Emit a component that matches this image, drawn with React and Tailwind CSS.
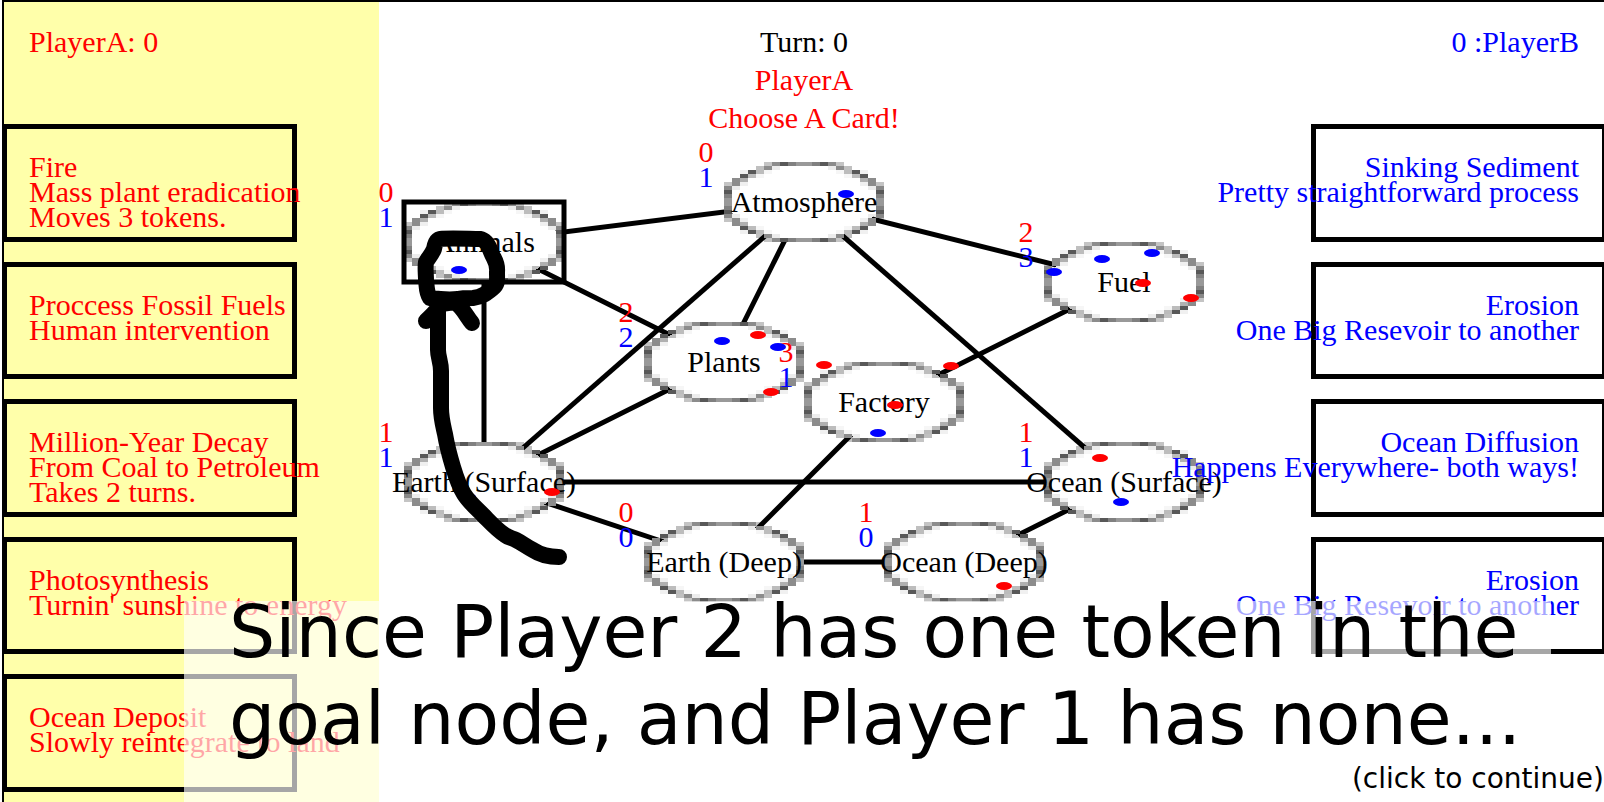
import React from 'react';

const NODES = [
  { id: 'animals', name: 'Animals', x: 105, y: 112, a: 0, b: 1, goal: true },
  { id: 'atmosphere', name: 'Atmosphere', x: 425, y: 72, a: 0, b: 1 },
  { id: 'fuel', name: 'Fuel', x: 745, y: 152, a: 2, b: 3 },
  { id: 'plants', name: 'Plants', x: 345, y: 232, a: 2, b: 2 },
  { id: 'factory', name: 'Factory', x: 505, y: 272, a: 3, b: 1 },
  { id: 'earthSurface', name: 'Earth (Surface)', x: 105, y: 352, a: 1, b: 1 },
  { id: 'oceanSurface', name: 'Ocean (Surface)', x: 745, y: 352, a: 1, b: 1 },
  { id: 'earthDeep', name: 'Earth (Deep)', x: 345, y: 432, a: 0, b: 0 },
  { id: 'oceanDeep', name: 'Ocean (Deep)', x: 585, y: 432, a: 1, b: 0 },
];

const BY_ID = Object.fromEntries(NODES.map((n) => [n.id, n]));

const EDGES = [
  ['animals', 'atmosphere'],
  ['animals', 'plants'],
  ['animals', 'earthSurface'],
  ['atmosphere', 'earthSurface'],
  ['atmosphere', 'plants'],
  ['atmosphere', 'oceanSurface'],
  ['atmosphere', 'fuel'],
  ['fuel', 'factory'],
  ['plants', 'earthSurface'],
  ['earthSurface', 'oceanSurface'],
  ['earthSurface', 'earthDeep'],
  ['earthDeep', 'factory'],
  ['earthDeep', 'oceanDeep'],
  ['oceanDeep', 'oceanSurface'],
];

const TOKENS = [
  ['b', 80, 140],
  ['b', 467, 64],
  ['b', 89, 367],
  ['a', 173, 362],
  ['b', 343, 211],
  ['a', 379, 205],
  ['b', 399, 217],
  ['a', 392, 262],
  ['a', 445, 235],
  ['a', 572, 236],
  ['a', 516, 275],
  ['b', 499, 303],
  ['a', 625, 456],
  ['b', 675, 142],
  ['b', 723, 129],
  ['b', 773, 123],
  ['a', 764, 153],
  ['a', 812, 168],
  ['a', 721, 328],
  ['b', 742, 372],
];

const CARDS_A = [
  ['Fire', 'Mass plant eradication', 'Moves 3 tokens.'],
  ['Proccess Fossil Fuels', 'Human intervention'],
  ['Million-Year Decay', 'From Coal to Petroleum', 'Takes 2 turns.'],
  ['Photosynthesis', "Turnin' sunshine to energy"],
  ['Ocean Deposit', 'Slowly reintegrate to land'],
];

const CARDS_B = [
  ['Sinking Sediment', 'Pretty straightforward process'],
  ['Erosion', 'One Big Resevoir to another'],
  ['Ocean Diffusion', 'Happens Everywhere- both ways!'],
  ['Erosion', 'One Big Resevoir to another'],
];

// Upper-left quarter of the 20x20 circle sprite: [column, row, gray level].
const SPRITE = [
  [5, 0, 196], [6, 0, 140], [7, 0, 88], [8, 0, 128], [9, 0, 153],
  [4, 1, 192], [5, 1, 140], [6, 1, 236],
  [2, 2, 240], [3, 2, 88], [4, 2, 188], [5, 2, 246],
  [2, 3, 88], [3, 3, 188], [4, 3, 246],
  [1, 4, 140], [2, 4, 176],
  [0, 5, 196], [1, 5, 140], [2, 5, 240],
  [0, 6, 136], [1, 6, 236],
  [0, 7, 88], [0, 8, 128], [0, 9, 153],
];

const SPRITE_CELLS = SPRITE.flatMap(([c, r, g]) => [
  [c, r, g],
  [19 - c, r, g],
  [c, 19 - r, g],
  [19 - c, 19 - r, g],
]);

function NodeShape({ x, y }) {
  return (
    <g transform={`translate(${x - 80} ${y - 40})`} shapeRendering="crispEdges">
      <ellipse cx="80" cy="40" rx="75" ry="38" fill="#fff" />
      {SPRITE_CELLS.map(([c, r, g]) => (
        <rect
          key={`${c}-${r}`}
          x={c * 8}
          y={r * 4}
          width="8"
          height="4"
          fill={g < 170 ? `rgb(${g} ${g} ${g})` : '#000'}
          fillOpacity={g < 170 ? 1 : 1 - g / 255}
        />
      ))}
    </g>
  );
}

function Board() {
  return (
    <div className="relative mx-auto h-[480px] w-[850px]">
      <svg className="absolute inset-0 overflow-visible" width="850" height="480" aria-hidden="true">
        {EDGES.map(([from, to]) => (
          <line
            key={`${from}-${to}`}
            x1={BY_ID[from].x}
            y1={BY_ID[from].y}
            x2={BY_ID[to].x}
            y2={BY_ID[to].y}
            stroke="#000"
            strokeWidth="5"
          />
        ))}
        {NODES.map((n) => (
          <NodeShape key={n.id} x={n.x} y={n.y} />
        ))}
        {NODES.filter((n) => n.goal).map((n) => (
          <rect
            key={n.id}
            x={n.x - 80}
            y={n.y - 40}
            width="160"
            height="80"
            fill="none"
            stroke="#000"
            strokeWidth="5"
          />
        ))}
      </svg>

      {NODES.map((n) => (
        <button
          key={n.id}
          type="button"
          className="absolute flex h-20 w-40 items-center justify-center pb-[2px] whitespace-nowrap"
          style={{ left: n.x - 80, top: n.y - 40 }}
        >
          {n.name}
        </button>
      ))}
      {NODES.map((n) => (
        <div
          key={n.id}
          className="absolute w-9 text-center"
          style={{ left: n.x - 116, top: n.y - 63 }}
        >
          <p className="text-[#ff0000]">{n.a}</p>
          <p className="text-[#0000ff]">{n.b}</p>
        </div>
      ))}

      <svg
        className="pointer-events-none absolute inset-0 overflow-visible"
        width="850"
        height="480"
        aria-hidden="true"
      >
        {TOKENS.map(([owner, x, y]) => (
          <ellipse key={`${x}-${y}`} cx={x} cy={y} rx="8" ry="4" fill={owner === 'a' ? '#f00' : '#00f'} />
        ))}
        <g
          transform="translate(-379 -130)"
          fill="none"
          stroke="#000"
          strokeWidth="16"
          strokeLinecap="round"
          strokeLinejoin="round"
        >
          <path d="M440 239 C450 238 470 239 480 239 C486 240 489 246 491 252 C494 260 498 262 497 272 C497 280 498 284 493 288 C487 293 482 297 473 298 C466 298 462 298 458 299 C448 300 438 299 430 298 C426 292 427 286 426 280 C426 274 425 268 426 262 C429 257 432 254 434 249 C435 244 436 240 440 239 Z" />
          <path d="M426 321 C431 316 436 312 441 304 L455 302 C464 309 466 316 472 323" />
          <path d="M438 302 V350 C438 357 441 362 441 371 V408 C441 418 443 425 445 434 C447 446 450 457 453 467 C456 477 459 486 464 494 C469 502 476 508 483 515 C490 522 497 530 505 535 C509 538 512 538 516 540 C522 543 527 547 533 550 C542 556 550 557 559 557" />
        </g>
      </svg>
    </div>
  );
}

export default function App() {
  return (
    <main className="relative min-h-screen w-full overflow-hidden bg-white pl-[2px] font-['Liberation_Serif',serif] text-[30px] leading-[25px] text-black">
      <div className="flex min-h-screen border-t-2 border-l-2 border-black">
        <aside className="flex w-[375px] shrink-0 flex-col bg-[#ffffaa] pb-[10px] text-[#ff0000]">
          <h2 className="h-[122px] pt-[27px] pl-[25px]">PlayerA: 0</h2>
          <div className="relative z-10 grid flex-1 grid-rows-5 gap-5">
            {CARDS_A.map((lines, i) => (
              <button
                key={i}
                type="button"
                className="flex w-[293px] flex-col items-start border-5 border-l-3 border-black pt-[25px] pl-[22px] whitespace-nowrap"
              >
                {lines.map((line) => (
                  <span key={line}>{line}</span>
                ))}
              </button>
            ))}
          </div>
        </aside>

        <section className="min-w-0 flex-1">
          <header className="flex flex-col items-center gap-[13px] pt-[27px]">
            <h1>Turn: 0</h1>
            <p className="text-[#ff0000]">PlayerA</p>
            <p className="text-[#ff0000]">Choose A Card!</p>
          </header>
          <Board />
        </section>

        <aside className="relative flex w-[375px] shrink-0 flex-col pb-[10px] text-[#0000ff]">
          <h2 className="h-[122px] pt-[27px] pr-[25px] text-right">0 :PlayerB</h2>
          <div className="grid flex-1 grid-rows-5 justify-items-end gap-5">
            {CARDS_B.map((lines, i) => (
              <button
                key={i}
                type="button"
                className="flex w-[293px] flex-col items-end border-5 border-r-2 border-black pt-[25px] pr-[23px] whitespace-nowrap"
              >
                {lines.map((line) => (
                  <span key={line}>{line}</span>
                ))}
              </button>
            ))}
          </div>
        </aside>
      </div>

      <section className="absolute right-0 bottom-0 left-[184px] z-20 pb-[6px] font-['DejaVu_Sans',sans-serif]">
        <div className="absolute top-[13px] right-[53px] bottom-0 left-0 bg-white/65" />
        <p className="relative pl-[45px] text-[73px] leading-[87px]">
          Since Player 2 has one token in the goal node, and Player 1 has none...
        </p>
        <button type="button" className="relative ml-auto block text-[28px] leading-[34px]">
          (click to continue)
        </button>
      </section>
    </main>
  );
}
